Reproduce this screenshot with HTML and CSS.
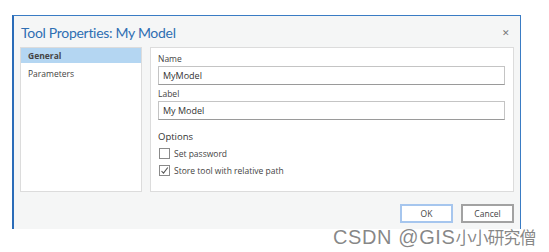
FILE: index.html
```html
<!DOCTYPE html>
<html lang="en">
<head>
    <meta charset="UTF-8">
    <title>Tool Properties: My Model</title>
    <link rel="stylesheet" href="styles.css">
</head>
<body>
    <div class="dialog">
        <div class="title-bar">
            <span class="title">Tool Properties: My Model</span>
            <span class="close">&#x2715;</span>
        </div>
        <div class="panels">
            <div class="nav">
                <div class="nav-item active">General</div>
                <div class="nav-item">Parameters</div>
            </div>
            <div class="content">
                <div class="field-label">Name</div>
                <div class="input focused">MyModel</div>
                <div class="field-label">Label</div>
                <div class="input">My Model</div>
                <div class="section">Options</div>
                <label class="check"><span class="box"></span>Set password</label>
                <label class="check"><span class="box checked">
                    <svg width="9" height="9" viewBox="0 0 9 9"><path d="M1.5 5 L3.5 7.2 L7.8 1.5" fill="none" stroke="#555" stroke-width="1.1"/></svg>
                </span>Store tool with relative path</label>
            </div>
        </div>
        <div class="buttons">
            <button class="btn default">OK</button>
            <button class="btn">Cancel</button>
        </div>
    </div>
    <div class="watermark">CSDN @GIS<span class="cjk">小小研究僧</span></div>
</body>
</html>
```

FILE: styles.css
```css
body {
    margin: 0;
    background: #fff;
    font-family: "Open Sans", "Noto Sans", sans-serif;
    color: #333;
    position: relative;
    height: 252px;
    overflow: hidden;
}
.dialog {
    margin: 15px 0 0 12px;
    width: 506px;
    height: 213px;
    background: #f5f6f6;
    border-top: 1px solid #3a7cc4;
    border-right: 1px solid #3a7cc4;
    border-left: 2px solid #2b6cb8;
    display: flex;
    flex-direction: column;
}
.title-bar {
    display: flex;
    justify-content: space-between;
    align-items: center;
    height: 31px;
    padding: 0 10px 0 7px;
}
.title {
    font-family: Lato, "Open Sans", sans-serif;
    font-size: 14px;
    letter-spacing: -0.3px;
    color: #2f6fb3;
    margin-top: 2px;
}
.close {
    font-size: 9px;
    color: #777;
    margin-top: 1px;
}
.panels {
    display: flex;
    gap: 8px;
    padding: 0 6px 0 6px;
    height: 145px;
}
.nav {
    width: 120px;
    background: #fff;
    border: 1px solid #dcdcdc;
    font-size: 8.5px;
}
.nav-item {
    height: 15px;
    line-height: 15px;
    padding-left: 7px;
    margin-bottom: 3px;
    color: #444;
}
.nav-item.active {
    background: #b4d6f2;
    font-weight: 700;
}
.content {
    flex: 1;
    background: #fff;
    border: 1px solid #dcdcdc;
    padding: 4px 8px 0 7px;
    font-size: 8.5px;
}
.field-label {
    height: 14px;
    line-height: 14px;
    color: #444;
}
.input {
    height: 17px;
    line-height: 17px;
    border: 1px solid #c4c4c4;
    border-bottom-color: #9a9a9a;
    padding-left: 4px;
    font-size: 9px;
    color: #333;
    margin-bottom: 2px;
}
.section {
    margin-top: 9px;
    height: 16px;
    line-height: 16px;
    font-size: 9.5px;
    color: #333;
}
.check {
    display: flex;
    align-items: center;
    gap: 4px;
    height: 17px;
    color: #444;
}
.box {
    width: 9px;
    height: 9px;
    border: 1px solid #8a8a8a;
    background: #fff;
    margin-left: 1px;
    display: flex;
    align-items: center;
    justify-content: center;
}
.buttons {
    display: flex;
    justify-content: flex-end;
    gap: 8px;
    padding: 12px 6px 0 0;
}
.btn {
    width: 53px;
    height: 19px;
    background: #fff;
    border: 2px solid #a2a2a2;
    font-family: inherit;
    font-size: 8.5px;
    color: #444;
    padding: 0;
}
.btn.default {
    border-color: #a6c6ee;
}
.watermark {
    position: absolute;
    left: 333px;
    top: 224px;
    font-family: "Liberation Sans", Arial, sans-serif;
    font-size: 20px;
    letter-spacing: 0.6px;
    color: rgba(95, 95, 95, 0.75);
}
.cjk {
    font-family: "Noto Sans CJK SC", sans-serif;
    font-size: 17px;
    letter-spacing: -1px;
}
```
